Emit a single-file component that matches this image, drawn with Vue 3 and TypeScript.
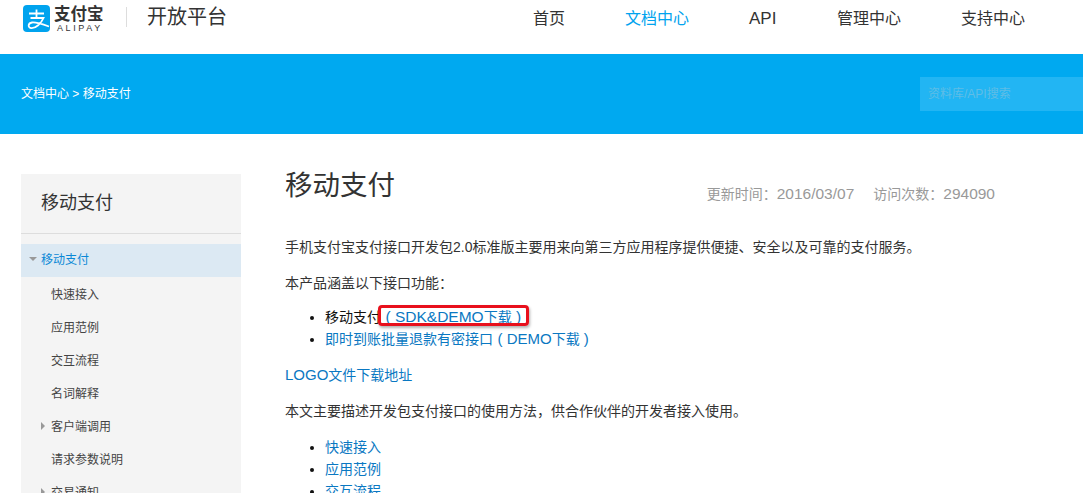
<script setup lang="ts">
const nav: string[] = ['首页', '文档中心', 'API', '管理中心', '支持中心']
const side: { t: string; arrow?: boolean }[] = [
  { t: '快速接入' }, { t: '应用范例' }, { t: '交互流程' }, { t: '名词解释' },
  { t: '客户端调用', arrow: true }, { t: '请求参数说明' }, { t: '交易通知', arrow: true },
]
const links: string[] = ['快速接入', '应用范例', '交互流程']
</script>

<template>
  <div class="page">
    <header class="top">
      <div class="brand">
        <svg class="logo" width="27" height="27" viewBox="0 0 27 27">
          <rect width="27" height="27" rx="4" fill="#00a3ee" />
          <path
            d="M6 8.5H21M13.5 4.5V13M7.5 13H20.5C18 18.5 13 23.5 8 23C4.5 22.5 5 18 9 17.5C13 17 19 19 26 21.5"
            fill="none" stroke="#fff" stroke-width="1.8"
          />
        </svg>
        <div class="word"><div class="cn">支付宝</div><div class="en">ALIPAY</div></div>
        <div class="sep"></div>
        <div class="plat">开放平台</div>
      </div>
      <nav class="nav">
        <a v-for="(n, i) in nav" :key="n" class="nav-item" :class="{ on: i === 1 }">{{ n }}</a>
      </nav>
    </header>
    <section class="banner">
      <div class="crumb">文档中心 &gt; 移动支付</div>
      <div class="search">资料库/API搜索</div>
    </section>
    <div class="body">
      <aside class="side">
        <h3 class="side-title">移动支付</h3>
        <div class="side-active"><i class="down"></i>移动支付</div>
        <div v-for="s in side" :key="s.t" class="side-item">
          <i v-if="s.arrow" class="right"></i>{{ s.t }}
        </div>
      </aside>
      <main class="main">
        <div class="head">
          <h1>移动支付</h1>
          <div class="meta">
            <span>更新时间：<b>2016/03/07</b></span>
            <span>访问次数：<b>294090</b></span>
          </div>
        </div>
        <p class="p1">手机支付宝支付接口开发包<b>2.0</b>标准版主要用来向第三方应用程序提供便捷、安全以及可靠的支付服务。</p>
        <p class="p2">本产品涵盖以下接口功能：</p>
        <ul class="list first">
          <li>移动支付<span class="hl"><a class="dl"><b>( SDK&amp;DEMO</b>下载<b> )</b></a><span class="box"></span></span></li>
          <li><a>即时到账批量退款有密接口<span class="dl"><b>( DEMO</b>下载<b> )</b></span></a></li>
        </ul>
        <p class="p3"><a><b>LOGO</b>文件下载地址</a></p>
        <p class="p4">本文主要描述开发包支付接口的使用方法，供合作伙伴的开发者接入使用。</p>
        <ul class="list second">
          <li v-for="l in links" :key="l"><a>{{ l }}</a></li>
        </ul>
      </main>
    </div>
  </div>
</template>

<style>
html, body { margin: 0; background: #fff; overflow: hidden; }
</style>

<style scoped>
.page {
  width: 1083px; height: 493px; overflow: hidden;
  font-family: "Liberation Sans", "Noto Sans CJK SC", sans-serif;
  color: #333; font-size: 14px;
}
a { color: #0a78c2; }
b { font-weight: 400; font-size: 15px; }
.dl { padding-left: 4.5px; color: #0a78c2; }
.hl b { font-size: 15.5px; }
.top { height: 54px; display: flex; position: relative; }
.brand { display: flex; align-items: flex-start; padding: 5px 0 0 23px; }
.logo { flex: none; display: block; }
.word { margin-left: 4px; width: 50px; color: #333; }
.cn { font-size: 16.5px; line-height: 17px; font-weight: 700; margin-top: 1px; white-space: nowrap; }
.en { font-size: 9px; line-height: 9px; letter-spacing: 2.6px; margin-top: 1px; padding-left: 3px; white-space: nowrap; }
.sep { width: 1px; height: 20px; background: #ddd; margin: 2px 20px 0 22px; }
.plat { font-size: 20px; line-height: 24px; color: #333; }
.nav { position: absolute; left: 533px; top: 9px; display: flex; }
.nav-item { font-size: 16px; line-height: 20px; color: #333; }
.nav-item:nth-child(1) { width: 92px; }
.nav-item:nth-child(2) { width: 124px; }
.nav-item:nth-child(3) { width: 88px; font-size: 17px; }
.nav-item:nth-child(4) { width: 124px; }
.nav-item.on { color: #00a3ee; }
.banner {
  height: 80px; background: #00a9f0; display: flex; align-items: center;
  justify-content: space-between; padding-left: 21px;
}
.crumb { color: #fff; font-size: 12px; margin-top: -3px; }
.search {
  width: 163px; height: 34px; box-sizing: border-box; padding-left: 8px; line-height: 34px;
  background: #22b5f3; color: #5fbde6; font-size: 12px; margin-top: -1px;
}
.body { display: flex; padding: 40px 0 0 21px; }
.side { width: 220px; height: 400px; background: #f4f4f4; flex: none; }
.side-title {
  margin: 0; height: 59px; line-height: 58px; padding-left: 20px; font-size: 18px;
  font-weight: 400; color: #333; border-bottom: 1px solid #ddd;
}
.side-active {
  margin-top: 10px; height: 33px; line-height: 33px; background: #dce9f3; color: #0a88d6;
  font-size: 12px; padding-left: 20px; position: relative; margin-bottom: 1px;
}
.down {
  position: absolute; left: 8px; top: 13px; width: 0; height: 0;
  border-left: 4px solid transparent; border-right: 4px solid transparent; border-top: 4px solid #999;
}
.side-item {
  height: 33px; line-height: 34px; padding-left: 30px; font-size: 12px; color: #444; position: relative;
}
.right {
  position: absolute; left: 20px; top: 12px; width: 0; height: 0;
  border-top: 4px solid transparent; border-bottom: 4px solid transparent; border-left: 4px solid #999;
}
.main { margin-left: 44px; width: 710px; }
.head { display: flex; height: 44px; justify-content: space-between; }
h1 { margin: -8px 0 0; font-size: 27.5px; line-height: 40px; font-weight: 400; color: #333; }
.meta { display: flex; gap: 19px; font-size: 14px; color: #999; line-height: 20px; margin-top: 10px; }
.meta b { font-size: 15.5px; }
p { margin: 0; font-size: 14px; line-height: 20px; color: #333; }
.p1 { margin-top: 19px; }
.p1 b { font-size: 14px; }
.p2 { margin-top: 16px; }
.list { margin: 0; padding: 0 0 0 40px; font-size: 14px; line-height: 22px; color: #111; }
.list.first { margin-top: 13px; }
.list.second { margin-top: 15px; }
.hl { display: inline-block; position: relative; height: 22px; vertical-align: top; }
.box {
  position: absolute; left: -3px; right: -8px; top: -1px; height: 21px; box-sizing: border-box;
  border: 3px solid #e8101c; border-radius: 4px; box-shadow: 1px 2px 3px rgba(0,0,0,.3);
}
.p3 { margin-top: 15px; }
.p4 { margin-top: 16px; }
</style>
